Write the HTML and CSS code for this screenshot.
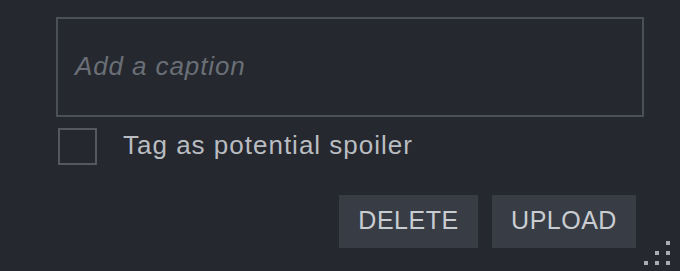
FILE: index.html
```html
<!DOCTYPE html>
<html lang="en">
<head>
<meta charset="utf-8">
<title>Caption</title>
<link rel="stylesheet" href="styles.css">
</head>
<body>
<div class="panel">
  <div class="caption-box"><span class="placeholder">Add a caption</span></div>
  <label class="spoiler-row">
    <span class="checkbox"></span>
    <span class="spoiler-label">Tag as potential spoiler</span>
  </label>
  <div class="actions">
    <button class="btn btn-delete">DELETE</button>
    <button class="btn btn-upload">UPLOAD</button>
  </div>
  <div class="grip">
    <span class="dot d1"></span>
    <span class="dot d2"></span><span class="dot d3"></span>
    <span class="dot d4"></span><span class="dot d5"></span><span class="dot d6"></span>
  </div>
</div>
</body>
</html>
```
FILE: styles.css
```css
html, body {
  margin: 0;
  padding: 0;
  background: #25282e;
  width: 680px;
  height: 271px;
  overflow: hidden;
}
.panel {
  position: relative;
  width: 680px;
  height: 271px;
  box-sizing: border-box;
  padding: 17px 0 0 56px;
  font-family: "Liberation Sans", Arial, sans-serif;
}
.caption-box {
  width: 588px;
  height: 100px;
  box-sizing: border-box;
  border: 2px solid #4a4f58;
  display: flex;
  align-items: center;
  padding-left: 17px;
  padding-bottom: 2px;
}
.placeholder {
  font-style: italic;
  font-size: 26px;
  letter-spacing: 0.9px;
  color: #6a6f77;
}
.spoiler-row {
  display: flex;
  align-items: center;
  margin-top: 11px;
  margin-left: 2px;
}
.checkbox {
  width: 39px;
  height: 37px;
  box-sizing: border-box;
  border: 2px solid #55595f;
}
.spoiler-label {
  margin-left: 26px;
  font-size: 26px;
  letter-spacing: 1px;
  color: #b9bdc2;
  padding-bottom: 2px;
}
.actions {
  display: flex;
  justify-content: flex-end;
  gap: 14px;
  margin-top: 30px;
  margin-right: 44px;
}
.btn {
  height: 53px;
  border: none;
  background: #383d45;
  color: #c9cdd2;
  font-family: "Liberation Sans", Arial, sans-serif;
  font-size: 25px;
  letter-spacing: 0.5px;
  padding: 0 0 2px 0;
  margin: 0;
}
.btn-delete { width: 139px; }
.btn-upload { width: 144px; }
.grip {
  position: absolute;
  right: 10px;
  bottom: 6px;
  display: grid;
  grid-template-columns: repeat(3, 4px);
  grid-template-rows: repeat(3, 4px);
  gap: 6px 7px;
}
.dot {
  width: 4px;
  height: 4px;
  background: #a9adb3;
}
.d1 { grid-column: 3; grid-row: 1; }
.d2 { grid-column: 2; grid-row: 2; }
.d3 { grid-column: 3; grid-row: 2; }
.d4 { grid-column: 1; grid-row: 3; }
.d5 { grid-column: 2; grid-row: 3; }
.d6 { grid-column: 3; grid-row: 3; }
```
